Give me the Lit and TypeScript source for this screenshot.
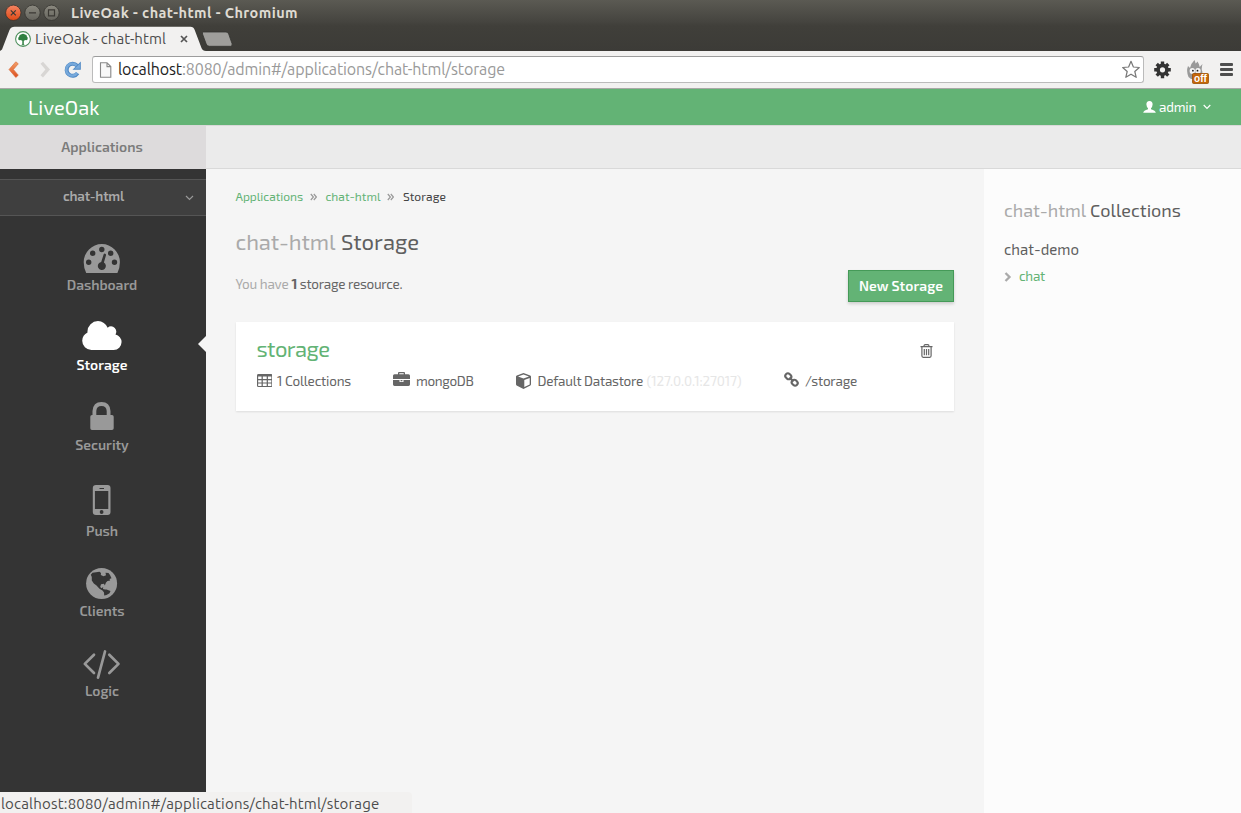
import { LitElement, html, css, svg } from "lit";
import { customElement, property } from "lit/decorators.js";

/* A run of text whose tracking is adjusted so that it fills a given width. */
@customElement("fit-text")
class FitText extends LitElement {
  @property({ type: Number }) w = 0;
  static styles = css`
    :host { display: inline-block; white-space: pre; flex: none; }
  `;
  firstUpdated() {
    const natural = this.getBoundingClientRect().width;
    const n = (this.textContent || "").length;
    if (this.w && n) {
      this.style.letterSpacing = (this.w - natural) / n + "px";
      this.style.width = this.w + "px";
    }
  }
  render() {
    return html`<slot></slot>`;
  }
}

const navIcons: Record<string, unknown> = {
  Dashboard: svg`<path fill-rule="evenodd" d="M7.2 38Q4.7 33 4.7 27.2a18.1 18.1 0 0 1 36.2 0Q40.900 33 38.400 38Z
    M12.4 27.300a2.7 2.700 0 1 0-5.400 0a2.700 2.700 0 1 0 5.400 0Z M16.400 18.300a2.700 2.700 0 1 0-5.400 0a2.700 2.700 0 1 0 5.400 0Z
    M25.500 14.500a2.700 2.700 0 1 0-5.400 0a2.700 2.700 0 1 0 5.400 0Z M34.400 18.300a2.700 2.700 0 1 0-5.400 0a2.700 2.700 0 1 0 5.400 0Z
    M38.200 27.300a2.700 2.700 0 1 0-5.400 0a2.700 2.700 0 1 0 5.400 0Z
    M24.600 19.600Q25.100 18.300 26.200 18.700Q27.300 19.100 27 20.200L24.900 27.500A4 4 0 1 1 22.200 27Z"/>`,
  Storage: svg`<path transform="translate(1.900 3.500) scale(.0205)" d="M1984 1152q0 159-112.500 271.500t-271.500 112.500h-1088q-185 0-316.500-131.500t-131.500-316.500q0-132 71-241.500t187-163.500q-2-28-2-43 0-212 150-362t362-150q158 0 286.500 88t187.500 230q70-62 166-62 106 0 181 75t75 181q0 75-41 138 129 30 213 134.500t84 239.500z"/>`,
  Security: svg`<path fill-rule="evenodd" d="M13.500 20V16Q14 7 22.500 7Q31 7 31.500 16V20H33Q34.700 20 34.700 21.700V33.300Q34.700 35 33 35H13Q11.300 35 11.300 33.300V21.700Q11.300 20 13 20ZM17.300 20H27.700V16Q27.400 11 22.500 11Q17.600 11 17.300 16Z"/>`,
  Push: svg`<path fill-rule="evenodd" d="M17 10H28.500Q31.500 10 31.500 13V37Q31.500 40 28.500 40H17Q13.800 40 13.800 37V13Q13.800 10 17 10ZM15.900 16V34H29.300V16ZM20.500 13V13.900H25V13ZM24.500 37a1.900 1.900 0 1 0-3.800 0a1.900 1.900 0 1 0 3.800 0Z"/>`,
  Clients: svg`<circle cx="22.600" cy="22.500" r="15.500"/><path class="hole" d="M11.800 13.800L13.500 11.800L17 11.200L20.500 10.800L22 12L21.800 14L24.500 15.200L27 14.200L26.500 11.800L29.500 12L31 14L32.500 17.200L30.500 18L31.200 19.600L28.500 20L27 21.500L25.800 24.500L25 22.800L22 23.300L21.200 26L22.600 27.200L24.200 26L24 28L26 28.600L27.500 28.500L31.500 30L30.500 32.200L27.500 34L25.200 34.600L25 31.500L23.500 29.500L20.500 27.800L17.500 24.500L14.800 22.500L12.800 19.500L12.800 16Z"/>`,
  Logic: svg`<path class="line" d="M15 13.800L5.800 22.900L15 32M30.300 13.800L39.500 22.900L30.300 32"/><path class="line" d="M26 10.500L19 36.700"/>`,
};

const navItems = [
  { name: "Dashboard", w: 70.5 },
  { name: "Storage", w: 51 },
  { name: "Security", w: 53.5 },
  { name: "Push", w: 32 },
  { name: "Clients", w: 45 },
  { name: "Logic", w: 34 },
];

@customElement("app-root")
class AppRoot extends LitElement {
  static styles = css`
    :host { display: block; width: 1241px; height: 813px; overflow: hidden; position: relative;
      font-family: "Exo 2", Roboto, sans-serif; font-size: 13.500px; color: #666; background: #f5f5f5; }
    * { box-sizing: border-box; }
    svg { display: block; flex: none; }
    .ubuntu { font-family: Ubuntu, "Noto Sans", sans-serif; }
    .titlebar { height: 26px; display: flex; align-items: center; padding-left: 5px; background: linear-gradient(#5b5a53, #45443f 85%, #403f3a); }
    .titlebar fit-text { margin-left: 10px; font-size: 14.500px; font-weight: 700; color: #dfdbd2; line-height: 24px; }
    .tabs { height: 25px; background: linear-gradient(#403f3a, #3c3b37); }
    .toolbar { height: 38px; background: #f2f1f0; border-bottom: 1px solid #a9a8a6; display: flex; align-items: center; }
    .omni { width: 1052px; height: 27px; border: 1px solid #bbb; border-top-color: #9c9c9c; border-radius: 3px; background: #fff; display: flex; align-items: center; padding-left: 6px; font-size: 16px; line-height: 24px; color: #999; margin-left: 10px; }
    .omni .host { color: #222; margin-left: 6px; }
    .omni .star { margin-left: auto; margin-right: 2px; }
    .omni fit-text { margin-top: -1px; }
    .tabrow { display: flex; height: 25px; align-items: stretch; }
    .tabshape { display: grid; width: 240px; }
    .tabshape > * { grid-area: 1 / 1; }
    .tabcontent { display: flex; align-items: center; padding: 1px 0 0 15px; font-size: 15px; color: #4c4c4c; height: 25px; }
    .tabcontent fit-text { margin: -2px 0 0 4px; }
    .tabcontent .x { margin-left: 14px; }
    .header { height: 36px; background: #63b375; display: flex; align-items: center; color: #fff; padding-left: 28px; font-size: 20px; line-height: 38px; }
    .user { margin-left: auto; display: flex; align-items: center; font-size: 13.500px; padding-right: 30px; }
    .user fit-text { margin: 0 7px 0 3px; }
    .subnav { height: 44px; background: #ebebeb; border-top: 1px solid #d9d9d9; border-bottom: 1px solid #d9d9d9; display: flex; }
    .apps { width: 206px; height: 43px; background: #dddbdc; display: flex; justify-content: center; align-items: center; padding: 0 2px 2px 0; color: #7b7b7b; font-weight: 600; font-size: 14px; }
    .body { display: grid; grid-template-columns: 206px 778px 257px; height: 644px; }
    .side { background: #343434; padding-top: 10px; color: #999; }
    .picker { height: 37px; background: #3f3f3f; border-top: 1px solid #555; border-bottom: 1px solid #555; display: flex; align-items: center; padding: 0 12px 4px 63px; justify-content: space-between; color: #aaa; font-weight: 600; }
    .picker svg { margin-top: 5px; }
    .nav { display: flex; flex-direction: column; gap: 20px; padding: 19px 3px 0 0; align-items: center; }
    .item { display: flex; flex-direction: column; align-items: center; width: 203px; line-height: 20px; font-weight: 600; font-size: 14px; color: #999; position: relative; }
    .item fit-text { margin-left: 1px; }
    .item svg { fill: #999; }
    .item.active { color: #fff; }
    .item.active svg { fill: #fff; }
    .notch { position: absolute; right: -3px; top: 21px; width: 8px; height: 16px; background: #f5f5f5; clip-path: polygon(0 50%, 100% 0, 100% 100%); }
    .item .hole { fill: #343434; }
    .line { fill: none; stroke: #999; stroke-width: 2.700; stroke-linecap: round; stroke-linejoin: round; }
    .main { padding: 17px 30px 0 29.500px; }
    .crumbs { display: flex; align-items: center; height: 20px; font-size: 12px; color: #444; }
    .crumbs svg { margin: 1px 9px 0 6.500px; }
    .green { color: #63b375; }
    h1, h2 { margin: 0; font-weight: 400; display: flex; align-items: center; color: #5f5f5f; }
    h1 { font-size: 22px; height: 30px; margin-top: 20px; }
    .soft { color: #aaa; }
    h1 .soft { margin-right: 5.500px; }
    .lead { display: flex; height: 32px; margin-top: 14px; line-height: 28px; }
    .lead b { margin: 0 2.500px 0 3px; }
    .btn { margin-left: auto; width: 106px; height: 32px; background: #63b375; border: 1px solid #459a58; box-shadow: 0 2px 3px rgba(0,0,0,.16); color: #fff; font: 600 14px/30px "Exo 2", Roboto, sans-serif; padding: 0 0 0 10px; text-align: left; }
    .card { margin: 20px 0 0 .500px; height: 89px; background: #fff; box-shadow: 0 1px 2px rgba(0,0,0,.1); padding: 14px 21px 0 20.500px; }
    .cardhead { display: flex; justify-content: space-between; align-items: center; height: 30px; font-size: 22px; line-height: 28px; }
    .cardhead fit-text { margin-top: -7px; }
    .facts { display: flex; align-items: center; height: 30px; margin-top: 0; }
    .facts svg { fill: #666; }
    .faint { color: #e6e6e6; }
    .right { background: #fcfcfc; padding: 28px 20px 0; }
    h2 { font-size: 18px; height: 26px; }
    h2 .soft { margin-right: 4px; }
    .db { font-size: 15px; color: #5f5f5f; height: 24px; line-height: 24px; margin-top: 14px; }
    .coll { display: flex; align-items: center; height: 24px; margin-top: 3px; }
    .coll svg { margin-top: 1px; }
    .coll fit-text { margin-left: 7px; }
    .status { position: absolute; left: 0; bottom: 0; width: 412px; height: 21px; background: #f2f1f0; border-top-right-radius: 4px; font-size: 15px; line-height: 23px; padding-left: 1px; color: #4c4c4c; overflow: hidden; }
  `;

  chrome() {
    return html`
      <div class="titlebar ubuntu">
        <svg width="56" height="20" viewBox="5 3 56 20">
          <defs><linearGradient id="o" x2="0" y2="1"><stop stop-color="#f58462"/><stop offset="1" stop-color="#df4a16"/></linearGradient>
          <linearGradient id="g" x2="0" y2="1"><stop stop-color="#8b897f"/><stop offset="1" stop-color="#65645d"/></linearGradient></defs>
          <circle cx="13.300" cy="12.800" r="7.700" fill="url(#o)" stroke="#33322e" stroke-width=".8"/>
          <circle cx="32.500" cy="12.800" r="7.700" fill="url(#g)" stroke="#33322e" stroke-width=".8"/>
          <circle cx="51.500" cy="12.800" r="7.700" fill="url(#g)" stroke="#33322e" stroke-width=".8"/>
          <path d="M10.800 10.300l5 5m0-5l-5 5M29 12.800h7M48.500 9.800h6v6h-6z" fill="none" stroke="#3b3934" stroke-width="1.200"/>
        </svg>
        <fit-text w="227">LiveOak - chat-html - Chromium</fit-text>
      </div>
      <div class="tabs ubuntu">
        <div class="tabrow"><div class="tabshape">
          <svg width="240" height="25" viewBox="0 0 240 25">
            <path d="M0 25L2 23.500L9.500 4Q11 .800 14.500 .800H190.500Q193.500 .800 194.700 4L201.500 22Q202.600 25 206 25Z" fill="#f2f1f0"/>
            <path d="M203.500 6H226Q228 6 228.700 8L232 17.500Q232.800 20.300 230.500 20.300H209.500Q207 20.300 206.200 18L202.500 8Q202 6 203.500 6Z" fill="#9f9e9b" stroke="#343330" stroke-width=".8"/>
          </svg>
          <div class="tabcontent">
            <svg width="16" height="16" viewBox="0 0 16 16"><circle cx="8" cy="8" r="7.400" fill="#fff" stroke="#4e8f5c" stroke-width="1.100"/><path d="M7.300 13.500V9.800L5.500 9Q4 9.600 3.300 8.400Q2.800 6.500 4.200 5.500Q4.200 3.600 6 3.600Q8 1.800 10 3.600Q11.900 3.800 11.900 5.500Q13.300 6.800 12.500 8.400Q11.800 9.500 10.500 9L8.800 9.800V13.500L10.500 14.200H5.500Z" fill="#2f8040"/></svg>
            <fit-text w="131">LiveOak - chat-html</fit-text>
            <svg class="x" width="8" height="8" viewBox="0 0 8 8"><path d="M1 1l6 6M7 1L1 7" stroke="#555" stroke-width="1.700"/></svg>
          </div>
        </div></div>
      </div>
      <div class="toolbar ubuntu">
        <svg width="82" height="36" viewBox="0 51 82 36">
          <defs><linearGradient id="b" x2="0" y2="1"><stop stop-color="#f3a069"/><stop offset="1" stop-color="#dc4e1e"/></linearGradient></defs>
          <path d="M15.800 60.800L18.300 62.800L13.400 68.500L18.300 74.200L15.800 76.500L9 68.500Z" fill="url(#b)" stroke="#d96a38" stroke-width=".6" stroke-linejoin="round"/>
          <path d="M43 60.800L40.500 62.800L45.400 68.500L40.500 74.200L43 76.500L50 68.500Z" fill="#d8d6d4"/>
          <g transform="translate(0 -1)"><path d="M77.600 73.200A6 6 0 1 1 77 65.700" fill="none" stroke="#4f88c4" stroke-width="4"/><path d="M80.800 61.600V69.700H72.500Z" fill="#4f88c4"/>
          <path d="M77.200 73A6 6 0 1 1 76.600 65.500" fill="none" stroke="#77a9db" stroke-width="2.400"/><path d="M79.900 63.500V68.800H74.500Z" fill="#77a9db"/></g>
        </svg>
        <div class="omni">
          <svg width="13" height="16" viewBox="0 0 13 16"><path d="M1.500 .8H8L11.800 4.600V15.200H1.500ZM8 .8V4.600H11.800" fill="#f8f8f8" stroke="#888" stroke-width="1.100"/></svg>
          <fit-text class="host" w="64">localhost</fit-text><fit-text w="323">:8080/admin#/applications/chat-html/storage</fit-text>
          <svg class="star" width="20" height="20" viewBox="0 0 20 20"><path d="M10 1.300L12.400 7L18.300 7.500L13.800 11.500L15.200 17.300L10 14.200L4.800 17.300L6.200 11.500L1.700 7.500L7.600 7Z" fill="#fff" stroke="#777" stroke-width="1.200" stroke-linejoin="round"/></svg>
        </div>
        <svg width="97" height="36" viewBox="1144 52 97 36">
          <g stroke="#333" stroke-width="3.400"><path d="M1162.500 61.400V78.200M1154.200 69.800H1170.800M1156.700 64L1168.300 75.600M1168.300 64L1156.700 75.600"/></g>
          <circle cx="1162.500" cy="69.800" r="4.400" fill="#f2f1f0" stroke="#333" stroke-width="3.600"/>
          <path d="M1188.500 77Q1186 71 1188 66L1190 68Q1190.500 64 1194.500 60Q1195.500 62 1195.500 63.500Q1196.500 63 1197.500 61.500Q1199.500 64.500 1199.700 67L1202.500 64Q1201 69 1202.500 72Q1202 76 1199 79H1191Z" fill="#999"/>
          <ellipse cx="1192.300" cy="71" rx="2.700" ry="3" fill="#f4f4f4"/><ellipse cx="1198" cy="71" rx="2.700" ry="3" fill="#f4f4f4"/><circle cx="1192.900" cy="70.700" r=".9" fill="#222"/><circle cx="1197.500" cy="70.700" r=".9" fill="#222"/>
          <rect x="1192.500" y="73.500" width="16" height="10" rx="1" fill="#c56608" stroke="#9a4f06" stroke-width=".8"/>
          <text x="1200.500" y="81.800" text-anchor="middle" font-family="Liberation Sans, sans-serif" font-size="10" font-weight="700" fill="#fff">off</text>
          <g fill="#4e4e4e"><rect x="1220" y="63" width="13" height="3" rx="1"/><rect x="1220" y="68" width="13" height="3" rx="1"/><rect x="1220" y="73" width="13" height="3" rx="1"/></g>
        </svg>
      </div>`;
  }

  crumbSep() {
    return html`<svg width="7" height="8" viewBox="0 0 7 8"><path d="M.8 1l2.600 3L.8 7M3.800 1l2.600 3L3.800 7" fill="none" stroke="#999" stroke-width="1.200"/></svg>`;
  }

  render() {
    return html`
      ${this.chrome()}
      <div class="header">
        <fit-text w="71.500">LiveOak</fit-text>
        <div class="user">
          <svg width="13" height="12" viewBox="0 0 13 12"><path d="M6.500 0Q9.700 0 9.600 3.500Q9.400 6 8 7.300V8.200Q12.500 9.400 12.800 11.800H.2Q.5 9.400 5 8.200V7.300Q3.600 6 3.400 3.500Q3.300 0 6.500 0Z" fill="#fff"/></svg>
          <fit-text w="37">admin</fit-text>
          <svg width="8" height="6" viewBox="0 0 8 6"><path d="M.7 1l3.300 3.300L7.300 1" fill="none" stroke="#fff" stroke-width="1.200"/></svg>
        </div>
      </div>
      <div class="subnav"><div class="apps"><fit-text w="81.500">Applications</fit-text></div></div>
      <div class="body">
        <div class="side">
          <div class="picker"><fit-text w="61">chat-html</fit-text>
            <svg width="9" height="6" viewBox="0 0 9 6"><path d="M1 1l3.500 3.500L8 1" fill="none" stroke="#999" stroke-width="1.200"/></svg></div>
          <div class="nav">
            ${navItems.map((i) => {
              const h = i.name === "Push" ? 46 : 40;
              return html`<div class="item ${i.name === "Storage" ? "active" : ""}">
                <svg width="45" height=${h} viewBox="0 0 45 ${h}">${navIcons[i.name]}</svg>
                <fit-text w=${i.w}>${i.name}</fit-text>
                ${i.name === "Storage" ? html`<span class="notch"></span>` : ""}
              </div>`;
            })}
          </div>
        </div>
        <div class="main">
          <div class="crumbs"><fit-text class="green" w="67.500">Applications</fit-text>${this.crumbSep()}<fit-text class="green" w="55">chat-html</fit-text>${this.crumbSep()}<fit-text w="43">Storage</fit-text></div>
          <h1><fit-text class="soft" w="100">chat-html</fit-text><fit-text w="78">Storage</fit-text></h1>
          <div class="lead"><fit-text class="soft" w="53">You have</fit-text><b>1</b><fit-text w="102.500">storage resource.</fit-text>
            <button class="btn"><fit-text w="84">New Storage</fit-text></button></div>
          <div class="card">
            <div class="cardhead"><fit-text class="green" w="73">storage</fit-text>
              <svg width="13" height="14" viewBox="0 0 13 14"><path d="M.5 2.700H12.500M4 2.500Q4 .7 5.200 .7H7.800Q9 .7 9 2.500M1.900 3V11.800Q1.900 13.300 3.200 13.300H9.800Q11.100 13.300 11.100 11.800V3M4.300 5V11.200M6.500 5V11.200M8.700 5V11.200" fill="none" stroke="#666" stroke-width="1.200"/></svg>
            </div>
            <div class="facts">
              <svg style="margin-top:-2px" width="15.500" height="13" viewBox="0 0 16 13.300" preserveAspectRatio="none"><path fill-rule="evenodd" d="M1.500 0H14.500Q16 0 16 1.500V12Q16 13.300 14.500 13.300H1.500Q0 13.300 0 12V1.500Q0 0 1.500 0ZM1.200 2.600V5.200H4.700V2.600ZM6 2.600V5.200H10V2.600ZM11.300 2.600V5.200H14.800V2.600ZM1.200 6.300V8.700H4.700V6.300ZM6 6.300V8.700H10V6.300ZM11.300 6.300V8.700H14.800V6.300ZM1.200 9.800V12.200H4.700V9.800ZM6 9.800V12.200H10V9.800ZM11.300 9.800V12.200H14.800V9.800Z"/></svg>
              <fit-text style="margin-left:5px" w="74">1 Collections</fit-text>
              <svg style="margin:-4px 6px 0 42px" width="17" height="14" viewBox="0 0 17 14"><path fill-rule="evenodd" d="M5 2.200V1Q5 0 6 0H11Q12 0 12 1V2.200H15.500Q17 2.200 17 3.700V7H0V3.700Q0 2.200 1.500 2.200ZM6.300 2.200H10.700V1.200H6.300ZM0 8H6.500V10H10.500V8H17V12.600Q17 14 15.500 14H1.500Q0 14 0 12.600ZM7.600 8H9.400V9.200H7.600Z"/></svg>
              <fit-text w="57.500">mongoDB</fit-text>
              <svg style="margin:0 7px 0 42px" width="15" height="16" viewBox="0 0 15 16"><path fill-rule="evenodd" d="M7.500 0L14.200 2.400Q15 2.700 15 3.500V11.500L14.400 12.500L7.500 16L.6 12.500L0 11.500V3.500Q0 2.700 .8 2.400ZM7.500 1.400L2 3.500L7.500 5.600L13 3.500ZM8.300 7V14.100L13.700 11.400V4.900Z"/></svg>
              <fit-text w="105.500">Default Datastore</fit-text><fit-text class="faint" style="margin-left:3.500px" w="95">(127.0.0.1:27017)</fit-text>
              <svg style="margin:-3px 6.500px 0 42px" width="15" height="15" viewBox="0 0 15 15"><g fill="none" stroke="#666" stroke-width="2.100"><rect x="-3.100" y="-2.500" width="6.200" height="5" rx="2.300" transform="translate(4.300 4.300) rotate(45)"/><rect x="-3.100" y="-2.500" width="6.200" height="5" rx="2.300" transform="translate(10.700 10.700) rotate(45)"/><path d="M5.500 5.500l4 4"/></g></svg>
              <fit-text w="52">/storage</fit-text>
            </div>
          </div>
        </div>
        <div class="right">
          <h2><fit-text class="soft" w="82">chat-html</fit-text><fit-text w="91">Collections</fit-text></h2>
          <div class="db"><fit-text w="75">chat-demo</fit-text></div>
          <div class="coll"><svg width="8" height="10" viewBox="0 0 8 10"><path d="M1.500 1l4 4l-4 4" fill="none" stroke="#aaa" stroke-width="2.300"/></svg><fit-text class="green" w="26">chat</fit-text></div>
        </div>
      </div>
      <div class="status ubuntu"><fit-text w="378.500">localhost:8080/admin#/applications/chat-html/storage</fit-text></div>
    `;
  }
}
